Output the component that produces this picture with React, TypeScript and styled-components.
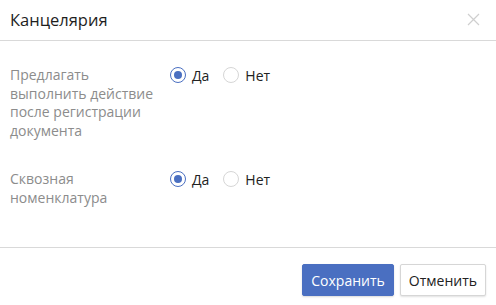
import React, { useState } from "react";
import styled, { createGlobalStyle } from "styled-components";

const Global = createGlobalStyle`
  html, body { margin: 0; padding: 0; background: #fff; }
  body { font-family: "Open Sans", "Liberation Sans", sans-serif; }
  * { box-sizing: border-box; }
`;

const Dialog = styled.div`
  width: 496px;
  height: 305px;
  display: flex;
  flex-direction: column;
  background: #fff;
`;

const Header = styled.div`
  height: 41px;
  display: flex;
  align-items: center;
  justify-content: space-between;
  padding: 0 10px 2px 10px;
  border-bottom: 1px solid #d9d9d9;
`;

const Title = styled.div`
  font-size: 16.5px;
  color: #1e1e1e;
`;

const Close = styled.button`
  width: 14px;
  height: 14px;
  border: none;
  background: none;
  padding: 0;
  margin-right: 6px;
  display: flex;
  align-items: center;
  justify-content: center;
  cursor: pointer;
`;

const Body = styled.div`
  flex: 1;
  display: flex;
  flex-direction: column;
  gap: 30px;
  padding: 25px 10px 0 10px;
  border-bottom: 1px solid #d9d9d9;
`;

const Row = styled.div`
  display: flex;
  align-items: flex-start;
`;

const Label = styled.div`
  width: 160px;
  font-size: 14px;
  line-height: 18.5px;
  color: #8c8c8c;
  padding-right: 12px;
`;

const Options = styled.div`
  display: flex;
  align-items: center;
  height: 18.5px;
  gap: 14px;
`;

const Option = styled.label`
  display: flex;
  align-items: center;
  gap: 6px;
  font-size: 14px;
  color: #222;
  cursor: pointer;
`;

const Circle = styled.span<{ $checked: boolean }>`
  width: 16px;
  height: 16px;
  border-radius: 50%;
  border: 1px solid ${(p) => (p.$checked ? "#4a6fc1" : "#d6d6d6")};
  display: flex;
  align-items: center;
  justify-content: center;
  background: #fff;
  &::after {
    content: "";
    width: 8px;
    height: 8px;
    border-radius: 50%;
    background: ${(p) => (p.$checked ? "#4a6fc1" : "transparent")};
  }
`;

const Footer = styled.div`
  height: 57px;
  display: flex;
  justify-content: flex-end;
  align-items: flex-start;
  gap: 6px;
  padding: 16px 10px 0 10px;
`;

const Button = styled.button<{ $primary?: boolean }>`
  height: 32px;
  padding: 0 8px;
  font-family: "Open Sans", "Liberation Sans", sans-serif;
  font-size: 14px;
  border-radius: 2px;
  cursor: pointer;
  color: ${(p) => (p.$primary ? "#fff" : "#222")};
  background: ${(p) => (p.$primary ? "#4a6fc1" : "#fff")};
  border: 1px solid ${(p) => (p.$primary ? "#4a6fc1" : "#d6d6d6")};
  box-shadow: ${(p) => (p.$primary ? "0 1px 2px rgba(0,0,0,0.15)" : "0 1px 2px rgba(0,0,0,0.12)")};
`;

function YesNo({ value, onChange }: { value: boolean; onChange: (v: boolean) => void }) {
  return (
    <Options>
      <Option onClick={() => onChange(true)}>
        <Circle $checked={value} />
        Да
      </Option>
      <Option onClick={() => onChange(false)}>
        <Circle $checked={!value} />
        Нет
      </Option>
    </Options>
  );
}

export default function App() {
  const [a, setA] = useState(true);
  const [b, setB] = useState(true);
  return (
    <Dialog>
      <Global />
      <Header>
        <Title>Канцелярия</Title>
        <Close aria-label="Закрыть">
          <svg width="13" height="13" viewBox="0 0 13 13">
            <path d="M1 1L12 12M12 1L1 12" stroke="#cfcfcf" strokeWidth="1.2" />
          </svg>
        </Close>
      </Header>
      <Body>
        <Row>
          <Label>Предлагать выполнить действие после регистрации документа</Label>
          <YesNo value={a} onChange={setA} />
        </Row>
        <Row>
          <Label>Сквозная номенклатура</Label>
          <YesNo value={b} onChange={setB} />
        </Row>
      </Body>
      <Footer>
        <Button $primary>Сохранить</Button>
        <Button>Отменить</Button>
      </Footer>
    </Dialog>
  );
}
